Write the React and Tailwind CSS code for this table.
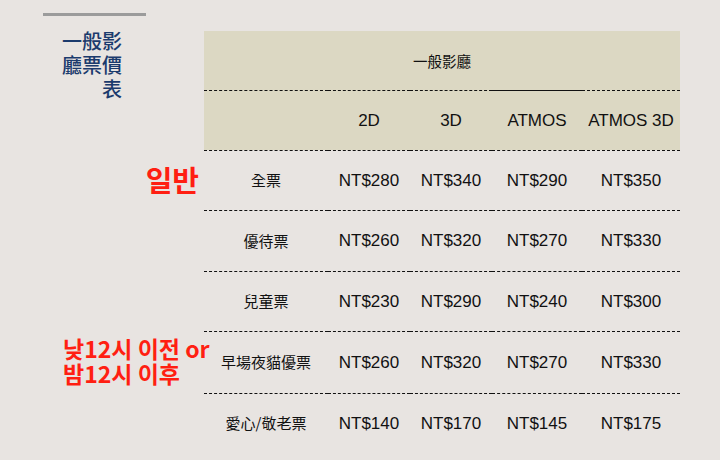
import React from "react";

const rows = [
  { name: "全票", p: ["NT$280", "NT$340", "NT$290", "NT$350"], h: "h-[60px]", label: "a" },
  { name: "優待票", p: ["NT$260", "NT$320", "NT$270", "NT$330"], h: "h-[61px]" },
  { name: "兒童票", p: ["NT$230", "NT$290", "NT$240", "NT$300"], h: "h-[60px]" },
  { name: "早場夜貓優票", p: ["NT$260", "NT$320", "NT$270", "NT$330"], h: "h-[62px]", label: "b" },
  { name: "愛心/敬老票", p: ["NT$140", "NT$170", "NT$145", "NT$175"], h: "h-[60px]", last: true },
];

const cjk = "font-['Noto_Sans_CJK_TC','Noto_Sans_CJK_KR',sans-serif]";
const latin = "font-['Liberation_Sans',Arial,sans-serif]";
const kr = "font-['Noto_Sans_CJK_KR','Noto_Sans_CJK_TC',sans-serif]";

export default function App() {
  return (
    <div className="w-[720px] h-[460px] bg-[#e8e4e1] overflow-hidden text-[#111]">
      <div className="pt-[13px]">
        <div className="ml-[43px] w-[103px] h-[3px] bg-[#9b9b9b]" />
      </div>
      <div className="mt-[15px] grid grid-cols-[204px_124px_82px_82px_90px_98px]">
        {/* Header row 1 */}
        <div className="row-span-2 relative">
          <div
            className={`${cjk} absolute right-[82px] -top-[2px] text-right text-[20px] leading-[24px] font-medium text-[#1b3b6d] whitespace-nowrap`}
          >
            一般影
            <br />
            廳票價
            <br />表
          </div>
        </div>
        <div
          className={`col-span-5 h-[59px] bg-[#dcd8c3] flex items-center justify-center ${cjk} text-[14.5px]`}
        >
          一般影廳
        </div>
        {/* Header row 2 */}
        <div className="h-[60px] bg-[#dcd8c3] border-t border-dashed border-[#111]" />
        {["2D", "3D", "ATMOS", "ATMOS 3D"].map((t, i) => (
          <div
            key={t}
            className={`h-[60px] bg-[#dcd8c3] border-t ${
              i === 2 ? "border-solid" : "border-dashed"
            } border-[#111] flex items-center justify-center ${latin} text-[17px]`}
          >
            {t}
          </div>
        ))}
        {/* Body */}
        {rows.map((r, ri) => (
          <React.Fragment key={ri}>
            <div className={`${r.h} relative`}>
              {r.label === "a" && (
                <div
                  className={`${kr} absolute right-[5px] inset-y-0 flex items-center text-[29px] font-bold text-[#ff1f12] leading-none pb-[2px]`}
                >
                  일반
                </div>
              )}
              {r.label === "b" && (
                <div
                  className={`${kr} absolute left-[63px] inset-y-0 flex items-center text-[23px] font-bold text-[#ff1f12] leading-[25px] whitespace-nowrap z-10 pb-[3px]`}
                >
                  <div>
                    낮12시 이전 or
                    <br />
                    밤12시 이후
                  </div>
                </div>
              )}
            </div>
            <div
              className={`${r.h} border-t border-dashed border-[#111] flex items-center justify-center ${cjk} text-[15px]`}
            >
              {r.name}
            </div>
            {r.p.map((p, pi) => (
              <div
                key={pi}
                className={`${r.h} border-t border-dashed border-[#111] flex items-center justify-center ${latin} text-[17px]`}
              >
                {p}
              </div>
            ))}
          </React.Fragment>
        ))}
      </div>
    </div>
  );
}
